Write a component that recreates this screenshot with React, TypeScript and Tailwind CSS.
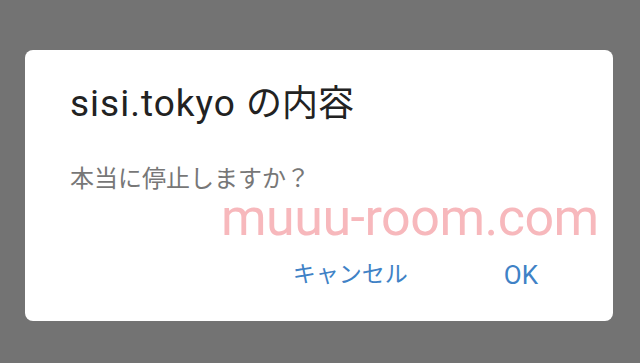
import React from 'react'

export default function App() {
  return (
    <div className="relative w-[640px] h-[363px] bg-[#737373] pt-[50px] px-[25px] overflow-hidden font-['Roboto','Noto_Sans_CJK_JP',sans-serif]">
      <div className="w-[588px] h-[271px] bg-white rounded-[8px] flex flex-col pl-[45px] pr-[28px]">
        <h1 className="mt-[31px] text-[37px] leading-[46px] text-[#222222] tracking-[1px]">
          sisi.tokyo <span className="text-[36px] tracking-normal">の内容</span>
        </h1>
        <p className="mt-[37px] text-[24px] leading-[30px] text-[#777777]">
          本当に停止しますか？
        </p>
        <div className="mt-auto mb-[31px] flex justify-end items-center gap-[96px] pr-[47px] text-[23px] leading-[30px] text-[#3f82c6]">
          <button>キャンセル</button>
          <button className="text-[26px]">OK</button>
        </div>
      </div>
      <div className="absolute left-[221px] top-[190px] text-[52px] leading-[56px] text-[#f7b8bc] tracking-[-0.5px] font-['Roboto',sans-serif]">
        muuu-room.com
      </div>
    </div>
  )
}
